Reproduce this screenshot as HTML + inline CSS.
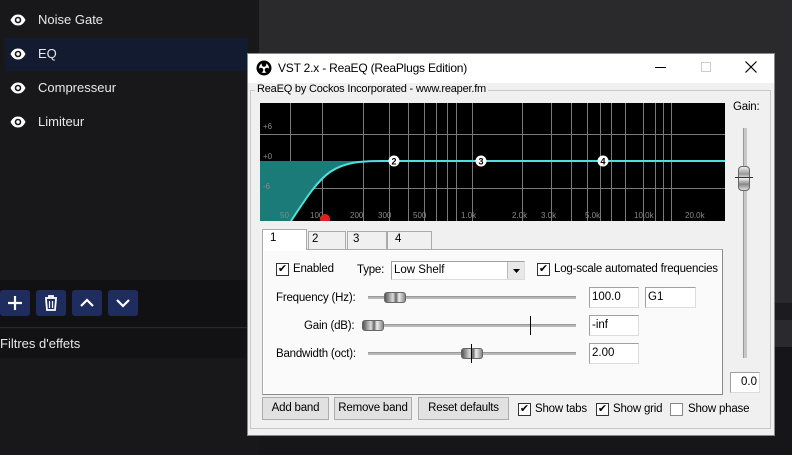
<!DOCTYPE html>
<html><head><meta charset="utf-8"><style>
*{margin:0;padding:0;box-sizing:border-box}
body{width:792px;height:455px;overflow:hidden;background:#161618;position:relative;font-family:"Liberation Sans",sans-serif}
.abs{position:absolute}
.lp{left:0;top:0;width:259px;height:280px;background:#18181b}
.row{position:absolute;left:0;width:248px;height:32px;color:#e8e8e8;font-size:13px;line-height:32px}
.row span{position:absolute;left:38px}
.eye{position:absolute;left:10px;top:10px}
.btn{position:absolute;top:290px;width:30px;height:26px;background:#1f2c5e;border-radius:3px}
.w{font-family:"Liberation Sans",sans-serif;font-size:11.5px;color:#000;letter-spacing:-0.2px;white-space:nowrap}
.box{position:absolute;background:#fff;border:1px solid #a0a0a0;border-right-color:#dcdcdc;border-bottom-color:#dcdcdc;font-size:11.5px;padding:1px 2px;line-height:16px}
.pb{position:absolute;top:397px;height:23px;border:1px solid #adadad;background:#e1e1e1;font-size:11.5px;letter-spacing:-0.2px;text-align:center;line-height:21px;white-space:nowrap}
.cb{position:absolute;width:13px;height:13px;border:1px solid #333;background:#fff;font-size:11px;line-height:11px;text-align:center}
.trk{position:absolute;height:3px;background:#b8b8b8;border-top:1px solid #999}
.th{position:absolute;width:22px;height:11px;border-radius:3px;background:linear-gradient(90deg,#555,#ddd 40%,#666 55%,#eee 70%,#888);border:1px solid #666}
</style></head><body>
<div class="abs" style="left:259px;top:0;width:533px;height:303px;background:#2a2a2d"></div>
<div class="abs" style="left:259px;top:303px;width:533px;height:17px;background:#1c1c1e"></div>
<div class="abs" style="left:259px;top:320px;width:533px;height:27px;background:#2a2a2d"></div>
<div class="abs lp"></div>
<div class="abs" style="left:5px;top:38px;width:243px;height:33px;background:#131b30"></div>
<svg width="0" height="0" style="position:absolute"><defs><symbol id="eye" viewBox="0 0 16 12"><path d="M0.5 6C2.5 2 5 0.5 8 0.5S13.5 2 15.5 6C13.5 10 11 11.5 8 11.5S2.5 10 0.5 6Z" fill="#fff"/><circle cx="8" cy="6" r="3.3" fill="#18181b"/><circle cx="8" cy="6" r="1.7" fill="#fff"/></symbol></defs></svg>
<div class="row" style="top:4px"><svg class="eye" width="16" height="12"><use href="#eye"/></svg><span>Noise Gate</span></div>
<div class="row" style="top:38px"><svg class="eye" width="16" height="12"><use href="#eye"/></svg><span>EQ</span></div>
<div class="row" style="top:72px"><svg class="eye" width="16" height="12"><use href="#eye"/></svg><span>Compresseur</span></div>
<div class="row" style="top:106px"><svg class="eye" width="16" height="12"><use href="#eye"/></svg><span>Limiteur</span></div>
<div class="abs" style="left:0;top:280px;width:259px;height:48px;background:#111113"></div>
<div class="btn" style="left:0"><svg width="30" height="26"><path d="M15 6v14M8 13h14" stroke="#fff" stroke-width="2.2"/></svg></div>
<div class="btn" style="left:36px"><svg width="30" height="26"><path d="M9 8h12M13 8V6h4v2M10 9l1 11h8l1-11" stroke="#fff" stroke-width="1.8" fill="none"/><path d="M13.5 11v7M16.5 11v7" stroke="#fff" stroke-width="1.2"/></svg></div>
<div class="btn" style="left:72px"><svg width="30" height="26"><path d="M9 16l6-6 6 6" stroke="#fff" stroke-width="2.2" fill="none"/></svg></div>
<div class="btn" style="left:108px"><svg width="30" height="26"><path d="M9 10l6 6 6-6" stroke="#fff" stroke-width="2.2" fill="none"/></svg></div>
<div class="abs" style="left:0;top:327px;width:259px;height:1px;background:#2a2a2d"></div>
<div class="abs" style="left:0;top:329px;width:259px;height:29px;background:#121214;color:#e8e8e8;font-size:13px;line-height:29px">Filtres d'effets</div>
<div class="abs" style="left:0;top:358px;width:259px;height:97px;background:#18181b"></div>

<!-- dialog -->
<div class="abs" style="left:247px;top:53px;width:528px;height:383px;background:#f0f0f0;border:1px solid #888"></div>
<div class="abs" style="left:248px;top:54px;width:526px;height:29px;background:#fff"></div>
<svg class="abs" style="left:256px;top:60px" width="16" height="16"><circle cx="8" cy="8" r="7.5" fill="#000"/><circle cx="8" cy="8" r="5" fill="#fff"/><circle cx="8" cy="4.5" r="2.3" fill="#000"/><circle cx="5" cy="10" r="2.3" fill="#000"/><circle cx="11" cy="10" r="2.3" fill="#000"/></svg>
<div class="abs w" style="left:278px;top:61px;font-size:12px">VST 2.x - ReaEQ (ReaPlugs Edition)</div>
<div class="abs" style="left:655px;top:67px;width:11px;height:1px;background:#000"></div>
<div class="abs" style="left:701px;top:62px;width:10px;height:10px;border:1px solid #ccc"></div>
<svg class="abs" style="left:745px;top:61px" width="12" height="12"><path d="M0.5 0.5l11 11M11.5 0.5l-11 11" stroke="#000" stroke-width="1.2"/></svg>
<div class="abs" style="left:250px;top:90px;width:521px;height:339px;border:1px solid #c8c8c8"></div>
<div class="abs w" style="left:255px;top:83px;background:#f0f0f0;padding:0 2px;font-size:11px">ReaEQ by Cockos Incorporated - www.reaper.fm</div>

<svg class="abs" style="left:260px;top:103px" width="465" height="118" viewBox="260 103 465 118">
<rect x="260" y="103" width="465" height="118" fill="#000"/>
<g stroke="#7a7a7a" stroke-width="1">
<path d="M290.5 103v118M322.5 103v118M363.5 103v118M389.5 103v118M408.5 103v118M424.5 103v118M436.5 103v118M447.5 103v118M456.5 103v118M472.5 103v118M522.5 103v118M551.5 103v118M571.5 103v118M587.5 103v118M600.5 103v118M611.5 103v118M625.5 103v118M643.5 103v118M655.5 103v118M663.5 103v118M671.5 103v118"/>
<path d="M260 134.5H725M260 161.5H725M260 188.5H725"/>
</g>
<path d="M260 161H384C360 161 345 162 330 172C316 182 305 200 291 221H260Z" fill="#1a7b78"/>
<path d="M291 221C305 200 316 182 330 172C345 162 360 161 384 161H725" stroke="#4fe0dc" stroke-width="2" fill="none"/>
<g font-size="8" fill="#888" font-family="Liberation Sans">
<text x="263" y="129">+6</text><text x="263" y="159">+0</text><text x="263" y="189">-6</text>
<text x="280" y="218">50</text><text x="310" y="218">100</text><text x="350" y="218">200</text><text x="378" y="218">300</text><text x="413" y="218">500</text><text x="461" y="218">1.0k</text><text x="512" y="218">2.0k</text><text x="541" y="218">3.0k</text><text x="585" y="218">5.0k</text><text x="634" y="218">10.0k</text><text x="685" y="218">20.0k</text>
</g>
<circle cx="325" cy="219" r="5" fill="#e02020"/>
<g font-size="9" font-weight="bold" text-anchor="middle" font-family="Liberation Sans">
<circle cx="394" cy="161" r="5.5" fill="#fff"/><text x="394" y="164.5">2</text>
<circle cx="481" cy="161" r="5.5" fill="#fff"/><text x="481" y="164.5">3</text>
<circle cx="603" cy="161" r="5.5" fill="#fff"/><text x="603" y="164.5">4</text>
</g>
</svg>
<div class="abs w" style="left:733px;top:101px">Gain:</div>
<div class="abs" style="left:743px;top:128px;width:4px;height:230px;background:#c8c8c8;border-left:1px solid #999"></div>
<div class="abs" style="left:738px;top:166px;width:12px;height:25px;border-radius:4px;background:linear-gradient(#eee,#999 30%,#eee 50%,#888 75%,#ddd);border:1px solid #666"></div>
<div class="abs" style="left:735px;top:177px;width:18px;height:1px;background:#333"></div>
<div class="box" style="left:730px;top:372px;width:30px;height:21px;text-align:right">0.0</div>

<!-- tabs -->
<div class="abs" style="left:262px;top:249px;width:461px;height:146px;background:#fff;border:1px solid #aaa;border-right-color:#888;border-bottom-color:#888"></div>
<div class="abs" style="left:264px;top:251px;width:457px;height:142px;background:#fafafa"></div>
<div class="abs w" style="left:262px;top:229px;width:45px;height:21px;background:#fff;border:1px solid #aaa;border-bottom:none;padding:2px 7px">1</div>
<div class="abs w" style="left:308px;top:231px;width:38px;height:18px;border:1px solid #aaa;border-bottom:none;padding:1px 3px">2</div>
<div class="abs w" style="left:347px;top:231px;width:40px;height:18px;border:1px solid #aaa;border-bottom:none;padding:1px 5px">3</div>
<div class="abs w" style="left:387px;top:231px;width:45px;height:18px;border:1px solid #aaa;border-bottom:none;padding:1px 7px">4</div>

<div class="cb" style="left:276px;top:263px">✔</div>
<div class="abs w" style="left:293px;top:263px">Enabled</div>
<div class="abs w" style="left:357px;top:264px">Type:</div>
<div class="box" style="left:391px;top:261px;width:134px;height:19px;padding:0 2px">Low Shelf</div>
<div class="abs" style="left:507px;top:262px;width:17px;height:17px;background:#e8e8e8;border-left:1px solid #bbb"><svg width="17" height="17"><path d="M5 7h7l-3.5 4z" fill="#000"/></svg></div>
<div class="cb" style="left:537px;top:263px">✔</div>
<div class="abs w" style="left:554px;top:263px">Log-scale automated frequencies</div>

<div class="abs w" style="left:276px;top:292px">Frequency (Hz):</div>
<div class="trk" style="left:368px;top:296px;width:208px"></div>
<div class="th" style="left:384px;top:292px"></div>
<div class="box" style="left:589px;top:287px;width:50px;height:21px">100.0</div>
<div class="box" style="left:645px;top:287px;width:51px;height:21px">G1</div>

<div class="abs w" style="left:304px;top:320px">Gain (dB):</div>
<div class="trk" style="left:365px;top:324px;width:211px"></div>
<div class="th" style="left:362px;top:320px"></div>
<div class="abs" style="left:530px;top:316px;width:1px;height:19px;background:#000"></div>
<div class="box" style="left:589px;top:315px;width:50px;height:21px">-inf</div>

<div class="abs w" style="left:276px;top:348px">Bandwidth (oct):</div>
<div class="trk" style="left:368px;top:352px;width:208px"></div>
<div class="th" style="left:461px;top:348px"></div>
<div class="abs" style="left:471px;top:344px;width:1px;height:19px;background:#000"></div>
<div class="box" style="left:589px;top:343px;width:50px;height:21px">2.00</div>

<div class="pb" style="left:262px;top:397px;width:67px">Add band</div>
<div class="pb" style="left:334px;top:397px;width:78px">Remove band</div>
<div class="pb" style="left:418px;top:397px;width:91px">Reset defaults</div>
<div class="cb" style="left:518px;top:403px">✔</div>
<div class="abs w" style="left:535px;top:403px">Show tabs</div>
<div class="cb" style="left:596px;top:403px">✔</div>
<div class="abs w" style="left:613px;top:403px">Show grid</div>
<div class="cb" style="left:670px;top:403px;border-color:#888"></div>
<div class="abs w" style="left:688px;top:403px">Show phase</div>
</body></html>
